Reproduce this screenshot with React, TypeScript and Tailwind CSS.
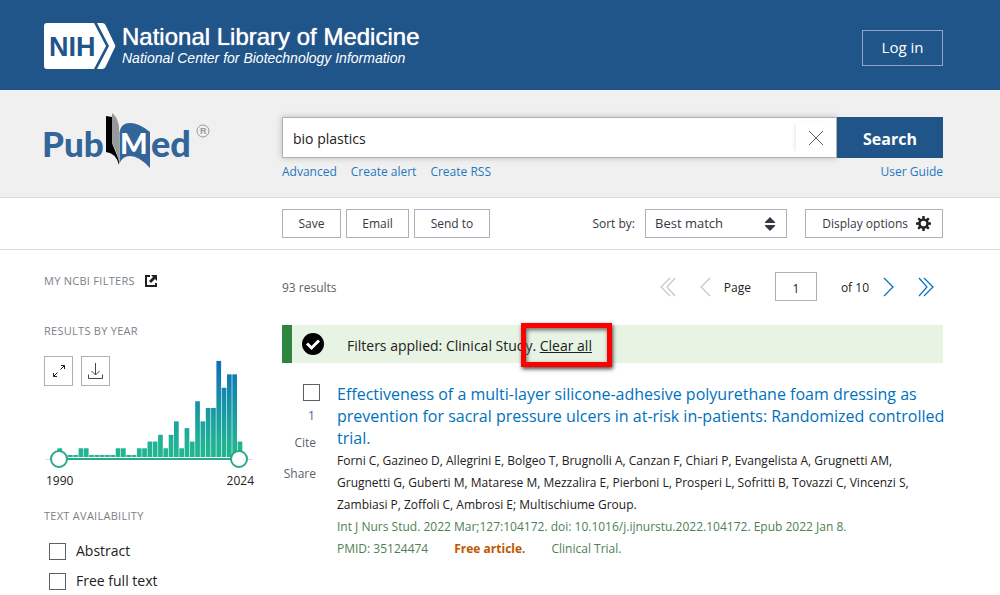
import type { ReactNode } from "react";

const yearCounts = [
  2, 1, 1, 1, 2, 2, 1, 1, 1, 1, 1, 2, 2, 1, 1, 2, 2, 3, 3, 4, 2, 4, 6, 2, 5, 3,
  9, 6, 8, 8, 15, 11, 13, 13, 3,
];

const boxButton = "border border-[#aeb0b5] bg-white text-[#323a45]";

const checkbox =
  "size-[17px] shrink-0 appearance-none border border-[#5b616b] bg-white checked:bg-[#20558a]";

const rangeInput =
  "pointer-events-none absolute top-0 left-[6px] h-[18px] w-[198px] appearance-none bg-transparent [&::-webkit-slider-thumb]:pointer-events-auto [&::-webkit-slider-thumb]:size-[18px] [&::-webkit-slider-thumb]:appearance-none [&::-webkit-slider-thumb]:rounded-full [&::-webkit-slider-thumb]:border-2 [&::-webkit-slider-thumb]:border-[#29a88a] [&::-webkit-slider-thumb]:bg-white";

function NihLogo() {
  return (
    <svg width="72" height="46" viewBox="0 0 72 46" aria-label="NIH">
      <path
        d="M3 0H50L62 23L50 46H3Q0 46 0 43V3Q0 0 3 0Z"
        fill="#fff"
      />
      <path
        d="M53 0H58Q60.500 0 61.500 2L71.500 23L61.500 44Q60.500 46 58 46H53L65 23Z"
        fill="#fff"
      />
      <text
        x="5"
        y="33"
        fontFamily="Liberation Sans, sans-serif"
        fontWeight="700"
        fontSize="27"
        fill="#20558a"
      >
        NIH
      </text>
    </svg>
  );
}

function PubMedLogo() {
  return (
    <svg
      className="-ml-1"
      width="172"
      height="58"
      viewBox="-4 0 172 58"
      aria-label="PubMed"
    >
      <g fontFamily="Lato, sans-serif" fontWeight="900" fill="#326599">
        <text x="-2" y="45" fontSize="35">
          Pub
        </text>
        <text x="107" y="45" fontSize="36">
          ed
        </text>
      </g>
      <path d="M62 4L68 5V31L75 48V53Q72 41 62 40Z" fill="#000" />
      <path d="M68 1Q73 4 75 14V50Q72 37 68 31Z" fill="#999" />
      <path
        d="M75.500 52V20Q77 11 86 11Q95 11 106 20V56Q95 44 86 44Q78 44 75.500 52Z"
        fill="#326599"
      />
      <text
        x="76"
        y="42"
        fontFamily="Lato, sans-serif"
        fontWeight="900"
        fontSize="29"
        fill="#fff"
      >
        M
      </text>
      <circle cx="159" cy="19" r="6" fill="none" stroke="#999" />
      <text
        x="156"
        y="22"
        fontFamily="Liberation Sans, sans-serif"
        fontWeight="700"
        fontSize="9"
        fill="#999"
      >
        R
      </text>
    </svg>
  );
}

function YearChart() {
  return (
    <svg
      className="absolute top-0 left-[9px]"
      width="190"
      height="103"
      viewBox="0 0 190 103"
      aria-hidden="true"
    >
      <defs>
        <linearGradient
          id="bars"
          x1="0"
          y1="5"
          x2="0"
          y2="101"
          gradientUnits="userSpaceOnUse"
        >
          <stop offset="0" stopColor="#0d70bb" />
          <stop offset="0.85" stopColor="#20b295" />
          <stop offset="1" stopColor="#20b78f" />
        </linearGradient>
      </defs>
      {yearCounts.map((count, i) => {
        const height = 2 + (count - 1) * 6.72;
        return (
          <rect
            key={i}
            x={4.4 + i * 5.3}
            y={101 - height}
            width="4.7"
            height={height}
            fill="url(#bars)"
          />
        );
      })}
    </svg>
  );
}

function Chevron({ double, flip }: { double?: boolean; flip?: boolean }) {
  return (
    <svg
      width="16"
      height="20"
      viewBox="0 0 16 20"
      fill="none"
      stroke="currentColor"
      strokeWidth="1.2"
      className={flip ? "rotate-180" : ""}
    >
      <path d={double ? "M10 1L1 10L10 19M15 1L7 10L15 19" : "M12 1L3 10L12 19"} />
    </svg>
  );
}

function SideTitle({ children }: { children: ReactNode }) {
  return (
    <h3 className="flex h-5 items-center text-[11px] tracking-wide text-[#7d8087] uppercase">
      {children}
    </h3>
  );
}

export default function App() {
  return (
    <div className="min-h-screen bg-white font-['Open_Sans',sans-serif] text-[13px] text-[#212121]">
      <header className="flex h-[90px] items-center justify-between bg-[#20558a] pt-px pr-[57px] pl-11 text-white">
        <a href="#" className="flex items-center gap-[6px]">
          <NihLogo />
          <span className="font-['Liberation_Sans',sans-serif] whitespace-nowrap">
            <span className="block text-[24px] leading-6 [text-shadow:0_0_1px_#fff]">
              National Library of Medicine
            </span>
            <span className="block text-[14px] leading-[18px] italic">
              National Center for Biotechnology Information
            </span>
          </span>
        </a>
        <button className="mt-1 h-9 w-[81px] border border-[#8ba6ca] text-[15px]">
          Log in
        </button>
      </header>

      <section className="flex h-[108px] border-b border-[#dcdcdc] bg-[#f0f0f0] pr-[57px] pl-11">
        <a href="#" className="w-[238px] shrink-0 pt-[22px]">
          <PubMedLogo />
        </a>
        <form className="min-w-0 flex-1 pt-[27px]">
          <div className="flex h-[41px]">
            <div className="flex min-w-0 flex-1 border border-[#aeb0b5] bg-white shadow-[0_0_6px_#b8b8b8]">
              <input
                aria-label="Search term"
                defaultValue="bio plastics"
                className="min-w-0 flex-1 px-[10px] pt-[2px] text-[14px] outline-none"
              />
              <button
                type="button"
                aria-label="Clear search"
                className="my-1 flex w-10 items-center justify-center shadow-[-3px_0_4px_-2px_#e4e4e4]"
              >
                <svg width="14" height="14" viewBox="0 0 14 14" stroke="#5b616b">
                  <path d="M0 0L14 14M14 0L0 14" />
                </svg>
              </button>
            </div>
            <button
              type="button"
              className="w-[106px] bg-[#20558a] pt-[2px] text-[16px] font-bold text-white"
            >
              Search
            </button>
          </div>
          <nav className="mt-1 flex gap-[14px] text-[12px] leading-5 text-[#1f78c1]">
            <a href="#">Advanced</a>
            <a href="#">Create alert</a>
            <a href="#">Create RSS</a>
            <a href="#" className="ml-auto">
              User Guide
            </a>
          </nav>
        </form>
      </section>

      <section className="flex h-[52px] items-center gap-[5px] border-b border-[#dcdcdc] pr-[57px] pl-[282px] text-[12px]">
        <button className={`${boxButton} h-[29px] w-[59px]`}>Save</button>
        <button className={`${boxButton} h-[29px] w-[63px]`}>Email</button>
        <button className={`${boxButton} h-[29px] w-[76px]`}>Send to</button>
        <label htmlFor="sort" className="mr-[5px] ml-auto text-[#323a45]">
          Sort by:
        </label>
        <div className="relative mr-[13px]">
          <select
            id="sort"
            className={`${boxButton} block h-[29px] w-[142px] appearance-none px-[9px] text-[13px]`}
          >
            <option>Best match</option>
          </select>
          <svg
            width="12"
            height="14"
            viewBox="0 0 12 14"
            className="pointer-events-none absolute top-2 right-[11px]"
            fill="#323a45"
          >
            <path d="M6 0L11 5V6H1V5ZM6 14L11 9V8H1V9Z" />
          </svg>
        </div>
        <button
          className={`${boxButton} flex h-[29px] w-[138px] items-center justify-end gap-2 pr-[11px] whitespace-nowrap`}
        >
          Display options
          <svg width="15" height="15" viewBox="-8 -8 16 16" fill="none">
            <circle r="4.3" stroke="#212121" strokeWidth="2.600" />
            {[0, 45, 90, 135, 180, 225, 270, 315].map((angle) => (
              <path
                key={angle}
                d="M-1.500 -5L-1.200 -8H1.200L1.500 -5Z"
                fill="#212121"
                transform={`rotate(${angle})`}
              />
            ))}
          </svg>
        </button>
      </section>

      <main className="flex pr-[57px] pl-11">
        <aside className="w-[238px] shrink-0 pt-[21px]">
          <SideTitle>
            <a href="#" className="flex items-center gap-[10px]">
              My NCBI Filters
              <svg width="12" height="12" viewBox="0 0 12 12" fill="none">
                <path d="M5 1H1V11H11V8" stroke="#212121" strokeWidth="2" />
                <path d="M6 0H12V6L10 4L6 8L4 6L8 2Z" fill="#212121" />
              </svg>
            </a>
          </SideTitle>
          <div className="mt-[30px]">
            <SideTitle>Results by year</SideTitle>
          </div>
          <div className="relative mt-[15px] h-[103px]">
            <YearChart />
            <div className="relative flex gap-2">
              <button
                aria-label="Expand"
                className="flex h-[30px] w-[29px] items-center justify-center border border-[#aeb0b5]"
              >
                <svg
                  width="14"
                  height="14"
                  viewBox="0 0 14 14"
                  fill="none"
                  stroke="#212121"
                >
                  <path d="M9 1.500H12.500V5M12.500 1.500L8.500 5.500M1.500 9V12.500H5M1.500 12.500L5.500 8.500" />
                </svg>
              </button>
              <button
                aria-label="Download"
                className="flex h-[30px] w-[29px] items-center justify-center border border-[#aeb0b5]"
              >
                <svg
                  width="15"
                  height="16"
                  viewBox="0 0 15 16"
                  fill="none"
                  stroke="#494440"
                >
                  <path d="M7.500 0V11.500M3.500 8L7.500 12L11.500 8M0.500 11.500V15.500H14.500V11.500" />
                </svg>
              </button>
            </div>
          </div>
          <div className="relative -mt-[9px] h-[18px] w-[210px]">
            <div className="mx-[2px] h-[10px] border-b border-[#d6d7d9]" />
            <div className="absolute top-2 right-[15px] left-[15px] h-[2px] bg-[#29a88a]" />
            <input
              type="range"
              aria-label="Start year"
              min={1990}
              max={2024}
              defaultValue={1990}
              className={rangeInput}
            />
            <input
              type="range"
              aria-label="End year"
              min={1990}
              max={2024}
              defaultValue={2024}
              className={rangeInput}
            />
          </div>
          <div className="mt-[3px] flex w-[210px] justify-between pl-[2px] text-[12px] leading-5">
            <span>1990</span>
            <span>2024</span>
          </div>
          <div className="mt-[15px]">
            <SideTitle>Text availability</SideTitle>
          </div>
          <div className="mt-[15px] space-y-[10px] pl-[5px] text-[14px] leading-5">
            <label className="flex items-center gap-[10px]">
              <input type="checkbox" className={checkbox} />
              Abstract
            </label>
            <label className="flex items-center gap-[10px]">
              <input type="checkbox" className={checkbox} />
              Free full text
            </label>
          </div>
        </aside>

        <div className="min-w-0 flex-1 pt-[22px]">
          <div className="flex h-[29px] items-center text-[12px]">
            <span className="pt-[3px] text-[#5b616b]">93 results</span>
            <button aria-label="First page" className="ml-auto text-[#c4c6ca]">
              <Chevron double />
            </button>
            <button aria-label="Previous page" className="ml-[22px] text-[#c4c6ca]">
              <Chevron />
            </button>
            <label htmlFor="page" className="ml-[10px] pt-[3px]">
              Page
            </label>
            <input
              id="page"
              defaultValue="1"
              className="ml-6 h-[29px] w-[42px] border border-[#aeb0b5] pt-[3px] text-center"
            />
            <span className="ml-6 pt-[3px]">of 10</span>
            <button aria-label="Next page" className="ml-[11px] text-[#0071bc]">
              <Chevron flip />
            </button>
            <button
              aria-label="Last page"
              className="mr-[9px] ml-[22px] text-[#0071bc]"
            >
              <Chevron double flip />
            </button>
          </div>

          <div className="mt-6 flex h-[38px] items-center border-l-[10px] border-[#2e8540] bg-[#e7f4e4] pl-[10px]">
            <svg width="22" height="22" viewBox="0 0 22 22">
              <circle cx="11" cy="11" r="11" />
              <path
                d="M5 10.500L9.500 15L17 7.500"
                fill="none"
                stroke="#fff"
                strokeWidth="3"
              />
            </svg>
            <p className="ml-[23px] pt-[3px] text-[14px] whitespace-nowrap">
              Filters applied: Clinical Study.{" "}
              <span className="relative">
                <a href="#" className="underline">
                  Clear all
                </a>
                <span className="pointer-events-none absolute -top-[13px] -left-[19px] h-[44px] w-[91px] border-[5px] border-[#fe0000] shadow-[1px_2px_4px_#444,inset_1px_2px_4px_#666]" />
              </span>
            </p>
          </div>

          <article className="mt-5 flex">
            <div className="flex w-[55px] shrink-0 flex-col text-[12px] leading-5 text-[#5b616b]">
              <input
                id="result-1"
                type="checkbox"
                className={`${checkbox} mt-px ml-[21px]`}
              />
              <label htmlFor="result-1" className="mt-[5px] pl-[26px] text-[#3f6b99]">
                1
              </label>
              <button className="mt-[7px] w-[34px] text-right">Cite</button>
              <button className="mt-[11px] w-[34px] text-right">Share</button>
            </div>
            <div className="min-w-0 flex-1">
              <h2 className="-mr-2 text-[16px] leading-[22px]">
                <a href="#" className="text-[#0071bc]">
                  Effectiveness of a multi-layer silicone-adhesive polyurethane
                  foam dressing as prevention for sacral pressure ulcers in
                  at-risk in-patients: Randomized controlled trial.
                </a>
              </h2>
              <p className="mt-px pr-6 text-[12px] leading-[22px]">
                Forni C, Gazineo D, Allegrini E, Bolgeo T, Brugnolli A, Canzan
                F, Chiari P, Evangelista A, Grugnetti AM, Grugnetti G, Guberti
                M, Matarese M, Mezzalira E, Pierboni L, Prosperi L, Sofritti B,
                Tovazzi C, Vincenzi S, Zambiasi P, Zoffoli C, Ambrosi E;
                Multischiume Group.
              </p>
              <p className="text-[12px] leading-[22px] text-[#4d8055]">
                Int J Nurs Stud. 2022 Mar;127:104172. doi:
                10.1016/j.ijnurstu.2022.104172. Epub 2022 Jan 8.
              </p>
              <p className="flex gap-[26px] text-[12px] leading-[22px] text-[#4d8055]">
                <span>PMID: 35124474</span>
                <span className="font-bold text-[#c05600]">Free article.</span>
                <span>Clinical Trial.</span>
              </p>
            </div>
          </article>
        </div>
      </main>
    </div>
  );
}
